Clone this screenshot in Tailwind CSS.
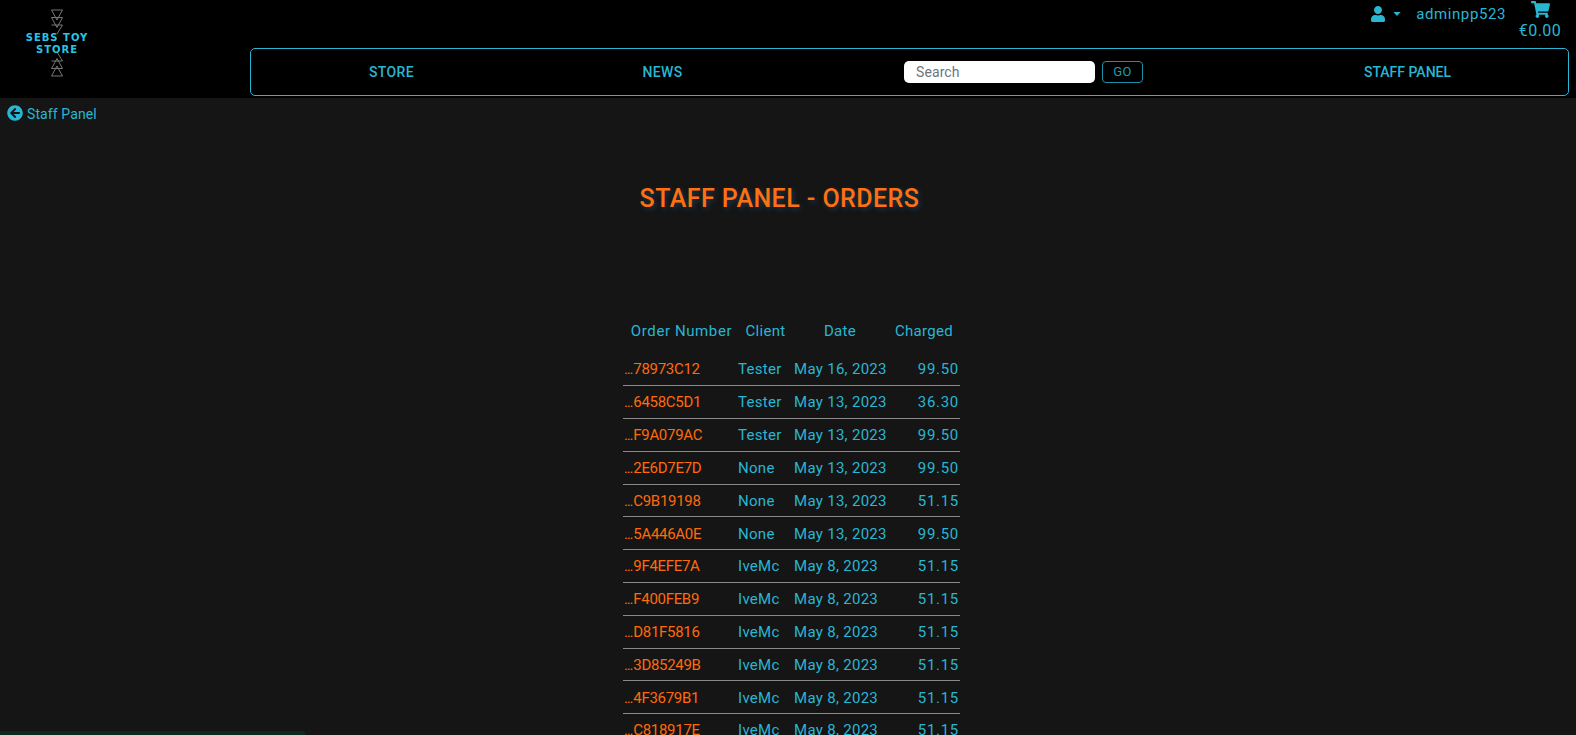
<!DOCTYPE html>
<html lang="en">
<head>
    <meta charset="UTF-8">
    <meta name="viewport" content="width=device-width, initial-scale=1.0">
    <title>Staff Panel - Orders</title>
    <script src="https://cdn.jsdelivr.net/npm/@tailwindcss/browser@4"></script>
</head>
<body class="relative h-[735px] overflow-hidden bg-[#151515] font-['Roboto',sans-serif] text-[#29b6d3]">
    <header class="bg-black h-[98px] flex">
        <div class="w-[250px] shrink-0 pl-[25px] pt-[9px]">
            <div class="relative w-[64px] h-[68px]">
                <svg width="64" height="68" viewBox="0 0 64 68" fill="none" stroke="#777777" stroke-width="1">
                    <path d="M26.500 1H37.500L32 11ZM26.500 8.500H37.500L32 18.500ZM26.500 16H37.500L32 25"/>
                    <path d="M26.500 67H37.500L32 57ZM26.500 59.500H37.500L32 49.500ZM26.500 52H37.500L32 43"/>
                </svg>
                <div class="absolute left-[-2px] right-[-2px] top-[23px] text-center font-['DejaVu_Sans',sans-serif] font-bold text-[#29c5e0] text-[10px] leading-[12px] tracking-[1px]">SEBS TOY<br>STORE</div>
            </div>
        </div>
        <div class="flex-1 flex flex-col">
            <div class="h-[48px] flex justify-end">
                <div class="flex items-start pt-[5px] pr-[8px]">
                    <svg class="mt-[1px]" width="14" height="16" viewBox="0 0 448 512" fill="#29b6d3"><path d="M224 256c70.700 0 128-57.300 128-128S294.700 0 224 0 96 57.300 96 128s57.300 128 128 128zm89.600 32h-16.700c-22.200 10.200-46.900 16-72.900 16s-50.600-5.800-72.900-16h-16.700C60.200 288 0 348.200 0 422.400V464c0 26.500 21.500 48 48 48h352c26.500 0 48-21.500 48-48v-41.600c0-74.200-60.200-134.400-134.400-134.400z"/></svg>
                    <svg class="mt-[7px] ml-[8px]" width="8" height="4" viewBox="0 0 9 5" fill="#29b6d3"><path d="M0 0h9L4.500 5z"/></svg>
                    <span class="ml-[15px] text-[15px] leading-[18px] tracking-[0.6px]">adminpp523</span>
                    <div class="ml-[6px] w-[56px] flex flex-col items-center -mt-[4px]">
                        <svg width="19" height="17" viewBox="0 0 576 512" fill="#29b6d3"><path d="M528.120 301.319l47.273-208C578.806 78.301 567.391 64 551.990 64H159.208l-9.166-44.810C147.758 8.021 137.930 0 126.529 0H24C10.745 0 0 10.745 0 24v16c0 13.255 10.745 24 24 24h69.883l70.248 343.435C147.325 417.100 136 435.222 136 456c0 30.928 25.072 56 56 56s56-25.072 56-56c0-15.674-6.447-29.835-16.824-40h209.647C430.447 426.165 424 440.326 424 456c0 30.928 25.072 56 56 56s56-25.072 56-56c0-22.172-12.888-41.332-31.579-50.405l5.517-24.276c3.413-15.018-8.002-29.319-23.403-29.319H218.117l-6.545-32h293.145c11.206 0 20.920-7.754 23.403-18.681z"/></svg>
                        <span class="text-[16px] leading-[20px] tracking-[0.5px] mt-[3px]">€0.00</span>
                    </div>
                </div>
            </div>
            <nav class="mr-[7px] h-[48px] border border-[#29b6d3] rounded-[5px] grid grid-cols-[272px_271px_349px_1fr] items-center text-[14px] font-medium tracking-[0.4px]">
                <a class="text-center pl-[9px]">STORE</a>
                <a class="text-center pl-[8px]">NEWS</a>
                <div class="flex items-center justify-end gap-[7px]">
                    <input type="text" placeholder="Search" class="w-[191px] h-[22px] bg-white rounded-[5px] px-[12px] text-[14px] font-normal tracking-[0.1px] outline-none placeholder:text-[#6c757d]">
                    <button class="w-[41px] h-[22px] border border-[#1a8fa8] rounded-[4px] text-[13px] font-normal text-[#1d9bb5]">GO</button>
                </div>
                <a class="text-center pl-[104px] tracking-[0px]">STAFF PANEL</a>
            </nav>
        </div>
    </header>

    <div class="flex items-center pl-[7px] pt-[7px] h-[23px]">
        <svg width="16" height="16" viewBox="0 0 512 512" fill="#29b6d3"><path d="M256 504C119 504 8 393 8 256S119 8 256 8s248 111 248 248-111 248-248 248zm28.900-143.600L209.400 288H392c13.300 0 24-10.700 24-24v-16c0-13.300-10.700-24-24-24H209.400l75.500-72.400c9.700-9.300 9.900-24.800.4-34.300l-11-10.900c-9.400-9.400-24.600-9.400-33.900 0L107.700 239c-9.400 9.400-9.400 24.600 0 33.900l132.700 132.700c9.400 9.400 24.600 9.400 33.900 0l11-10.900c9.500-9.500 9.300-25-.4-34.300z"/></svg>
        <a class="ml-[4px] mt-[2px] text-[14px] tracking-[0.1px]">Staff Panel</a>
    </div>

    <h1 class="mt-[62px] pr-[17px] text-center text-[25px] leading-[32px] font-medium text-[#ff7010] tracking-[0.45px] [text-shadow:2px_2px_5px_#1c3a52]">STAFF PANEL - ORDERS</h1>

    <table class="mt-[103px] ml-[623px] w-[337px] table-fixed border-collapse text-[15px] tracking-[0.3px] whitespace-nowrap">
        <thead>
            <tr class="h-[35px] align-top">
                <th class="font-normal text-center pt-[2px] w-[115px] pl-[2px] tracking-[0.6px]">Order Number</th>
                <th class="font-normal text-center pt-[2px] w-[56px] pr-[1px]">Client</th>
                <th class="font-normal text-center pt-[2px] w-[95px] pr-[3px]">Date</th>
                <th class="font-normal text-center pt-[2px] w-[71px] pr-[1px]">Charged</th>
            </tr>
        </thead>
        <tbody class="[&_td]:pt-[1px]">
            <tr class="h-[32.800px] border-b border-[#8a8a8a]"><td class="text-[#ff6a0a] tracking-[-0.3px] pl-[1px]"><span class="tracking-[-1.2px] mr-[1px]">...</span>78973C12</td><td>Tester</td><td>May 16, 2023</td><td class="text-right pr-[1px] tracking-[0.7px]">99.50</td></tr>
            <tr class="h-[32.800px] border-b border-[#8a8a8a]"><td class="text-[#ff6a0a] tracking-[-0.3px] pl-[1px]"><span class="tracking-[-1.2px] mr-[1px]">...</span>6458C5D1</td><td>Tester</td><td>May 13, 2023</td><td class="text-right pr-[1px] tracking-[0.7px]">36.30</td></tr>
            <tr class="h-[32.800px] border-b border-[#8a8a8a]"><td class="text-[#ff6a0a] tracking-[-0.3px] pl-[1px]"><span class="tracking-[-1.2px] mr-[1px]">...</span>F9A079AC</td><td>Tester</td><td>May 13, 2023</td><td class="text-right pr-[1px] tracking-[0.7px]">99.50</td></tr>
            <tr class="h-[32.800px] border-b border-[#8a8a8a]"><td class="text-[#ff6a0a] tracking-[-0.3px] pl-[1px]"><span class="tracking-[-1.2px] mr-[1px]">...</span>2E6D7E7D</td><td>None</td><td>May 13, 2023</td><td class="text-right pr-[1px] tracking-[0.7px]">99.50</td></tr>
            <tr class="h-[32.800px] border-b border-[#8a8a8a]"><td class="text-[#ff6a0a] tracking-[-0.3px] pl-[1px]"><span class="tracking-[-1.2px] mr-[1px]">...</span>C9B19198</td><td>None</td><td>May 13, 2023</td><td class="text-right pr-[1px] tracking-[0.7px]">51.15</td></tr>
            <tr class="h-[32.800px] border-b border-[#8a8a8a]"><td class="text-[#ff6a0a] tracking-[-0.3px] pl-[1px]"><span class="tracking-[-1.2px] mr-[1px]">...</span>5A446A0E</td><td>None</td><td>May 13, 2023</td><td class="text-right pr-[1px] tracking-[0.7px]">99.50</td></tr>
            <tr class="h-[32.800px] border-b border-[#8a8a8a]"><td class="text-[#ff6a0a] tracking-[-0.3px] pl-[1px]"><span class="tracking-[-1.2px] mr-[1px]">...</span>9F4EFE7A</td><td>IveMc</td><td>May 8, 2023</td><td class="text-right pr-[1px] tracking-[0.7px]">51.15</td></tr>
            <tr class="h-[32.800px] border-b border-[#8a8a8a]"><td class="text-[#ff6a0a] tracking-[-0.3px] pl-[1px]"><span class="tracking-[-1.2px] mr-[1px]">...</span>F400FEB9</td><td>IveMc</td><td>May 8, 2023</td><td class="text-right pr-[1px] tracking-[0.7px]">51.15</td></tr>
            <tr class="h-[32.800px] border-b border-[#8a8a8a]"><td class="text-[#ff6a0a] tracking-[-0.3px] pl-[1px]"><span class="tracking-[-1.2px] mr-[1px]">...</span>D81F5816</td><td>IveMc</td><td>May 8, 2023</td><td class="text-right pr-[1px] tracking-[0.7px]">51.15</td></tr>
            <tr class="h-[32.800px] border-b border-[#8a8a8a]"><td class="text-[#ff6a0a] tracking-[-0.3px] pl-[1px]"><span class="tracking-[-1.2px] mr-[1px]">...</span>3D85249B</td><td>IveMc</td><td>May 8, 2023</td><td class="text-right pr-[1px] tracking-[0.7px]">51.15</td></tr>
            <tr class="h-[32.800px] border-b border-[#8a8a8a]"><td class="text-[#ff6a0a] tracking-[-0.3px] pl-[1px]"><span class="tracking-[-1.2px] mr-[1px]">...</span>4F3679B1</td><td>IveMc</td><td>May 8, 2023</td><td class="text-right pr-[1px] tracking-[0.7px]">51.15</td></tr>
            <tr class="h-[32.800px] border-b border-[#8a8a8a]"><td class="text-[#ff6a0a] tracking-[-0.3px] pl-[1px]"><span class="tracking-[-1.2px] mr-[1px]">...</span>C818917E</td><td>IveMc</td><td>May 8, 2023</td><td class="text-right pr-[1px] tracking-[0.7px]">51.15</td></tr>
        </tbody>
    </table>

    <div class="fixed left-0 bottom-0 w-[305px] h-[4px] bg-[#0d2a20] rounded-tr-[3px]"></div>
</body>
</html>
